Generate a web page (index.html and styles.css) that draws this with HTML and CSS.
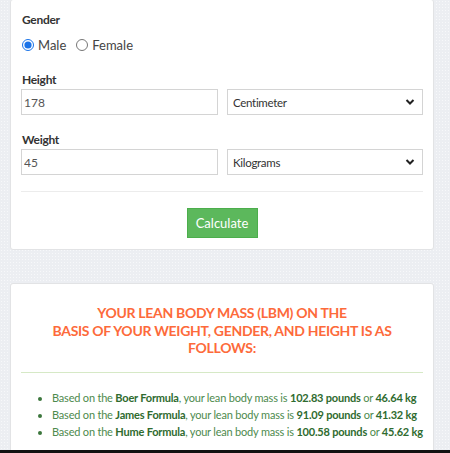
FILE: index.html
```html
<!DOCTYPE html>
<html>
<head>
<meta charset="utf-8">
<link rel="stylesheet" href="styles.css">
</head>
<body>
<div class="page">
  <div class="card form-card">
    <div class="label">Gender</div>
    <div class="radios">
      <label class="radio"><input type="radio" name="g" checked> Male</label>
      <label class="radio"><input type="radio" name="g"> Female</label>
    </div>
    <div class="label label-gap">Height</div>
    <div class="row">
      <input class="field" type="text" value="178">
      <div class="select-wrap">
        <select class="field select"><option>Centimeter</option></select>
        <svg class="chev" width="10" height="8" viewBox="0 0 10 8"><path d="M1.5 2 L5 5.5 L8.5 2" fill="none" stroke="#222" stroke-width="2"/></svg>
      </div>
    </div>
    <div class="label label-gap2">Weight</div>
    <div class="row">
      <input class="field" type="text" value="45">
      <div class="select-wrap">
        <select class="field select"><option>Kilograms</option></select>
        <svg class="chev" width="10" height="8" viewBox="0 0 10 8"><path d="M1.5 2 L5 5.5 L8.5 2" fill="none" stroke="#222" stroke-width="2"/></svg>
      </div>
    </div>
    <hr class="sep">
    <div class="actions"><button class="btn">Calculate</button></div>
  </div>

  <div class="card result-card">
    <h2 class="result-title">YOUR LEAN BODY MASS (LBM) ON THE<br>BASIS OF YOUR WEIGHT, GENDER, AND HEIGHT IS AS FOLLOWS:</h2>
    <hr class="sep-green">
    <ul class="results">
      <li>Based on the <b>Boer Formula</b>, your lean body mass is <b>102.83 pounds</b> or <b>46.64 kg</b></li>
      <li>Based on the <b>James Formula</b>, your lean body mass is <b>91.09 pounds</b> or <b>41.32 kg</b></li>
      <li>Based on the <b>Hume Formula</b>, your lean body mass is <b>100.58 pounds</b> or <b>45.62 kg</b></li>
    </ul>
  </div>
</div>
<div class="bottom-bar"></div>
</body>
</html>
```
FILE: styles.css
```css
html, body { margin: 0; padding: 0; }
body {
  background-color: #eceef2;
  background-image: radial-gradient(#f7f8fa 0.6px, transparent 0.8px);
  background-size: 3px 3px;
  font-family: Lato, "Open Sans", sans-serif;
  color: #333;
  height: 453px;
  overflow: hidden;
}
.page { padding: 0 16px 0 10px; }
.card {
  background: #fff;
  border: 1px solid #e2e3e5;
  border-radius: 3px;
}
.form-card {
  margin-top: -1px;
  padding: 0 10px 11px 10px;
}
.label {
  font-size: 12px;
  font-weight: 700;
  letter-spacing: -0.3px;
  line-height: 18px;
  color: #333;
  padding-left: 1px;
  padding-top: 11px;
}
.label-gap { padding-top: 17px; }
.label-gap2 { padding-top: 16px; }
.radios {
  display: flex;
  gap: 9px;
  margin-top: 7px;
  height: 18px;
  align-items: center;
}
.radio {
  display: flex;
  align-items: center;
  gap: 4px;
  font-size: 13px;
  color: #444;
}
.radio input {
  margin: 0 0 0 1px;
  width: 12px;
  height: 12px;
  accent-color: #1a73e8;
}
.row {
  display: flex;
  gap: 9px;
}
.field {
  box-sizing: border-box;
  height: 26px;
  border: 1px solid #d4d4d4;
  border-radius: 0;
  font-family: Lato, "Open Sans", sans-serif;
  font-size: 12px;
  color: #555;
  padding: 0 2px;
  background: #fff;
  outline: none;
}
.row > .field { width: 197px; }
.select-wrap { position: relative; width: 196px; }
.select {
  width: 100%;
  appearance: none;
  -webkit-appearance: none;
  color: #333;
  font-size: 11.5px;
  letter-spacing: -0.3px;
  padding: 0 5px;
}
.chev { position: absolute; right: 8px; top: 9px; pointer-events: none; }
.sep {
  border: 0;
  border-top: 1px solid #ececec;
  margin: 16px 0 0 0;
}
.actions {
  display: flex;
  justify-content: center;
  margin-top: 16px;
}
.btn {
  background: #5cb85c;
  border: 1px solid #4cae4c;
  color: #fff;
  font-family: Lato, "Open Sans", sans-serif;
  font-size: 13px;
  height: 30px;
  width: 71px;
  padding: 0;
  border-radius: 0;
}
.result-card {
  margin-top: 33px;
  padding: 20px 10px 20px 10px;
}
.result-title {
  margin: 0;
  text-align: center;
  color: #fd6a3a;
  font-size: 14px;
  letter-spacing: -0.3px;
  font-weight: 700;
  line-height: 17.5px;
  padding: 0 20px;
}
.sep-green {
  border: 0;
  border-top: 1px solid #d6e9c6;
  margin: 15px 0 0 0;
}
.results {
  margin: 16px 0 0 0;
  padding-left: 31px;
  font-size: 11px;
  letter-spacing: -0.2px;
  line-height: 17px;
  color: #4d8a4d;
}
.results b { color: #2f6b2f; font-weight: 700; }
.results li::marker { color: #3c763d; }
.bottom-bar {
  position: fixed;
  left: 0; right: 0; bottom: 0;
  height: 3px;
  background: #111;
}
```
